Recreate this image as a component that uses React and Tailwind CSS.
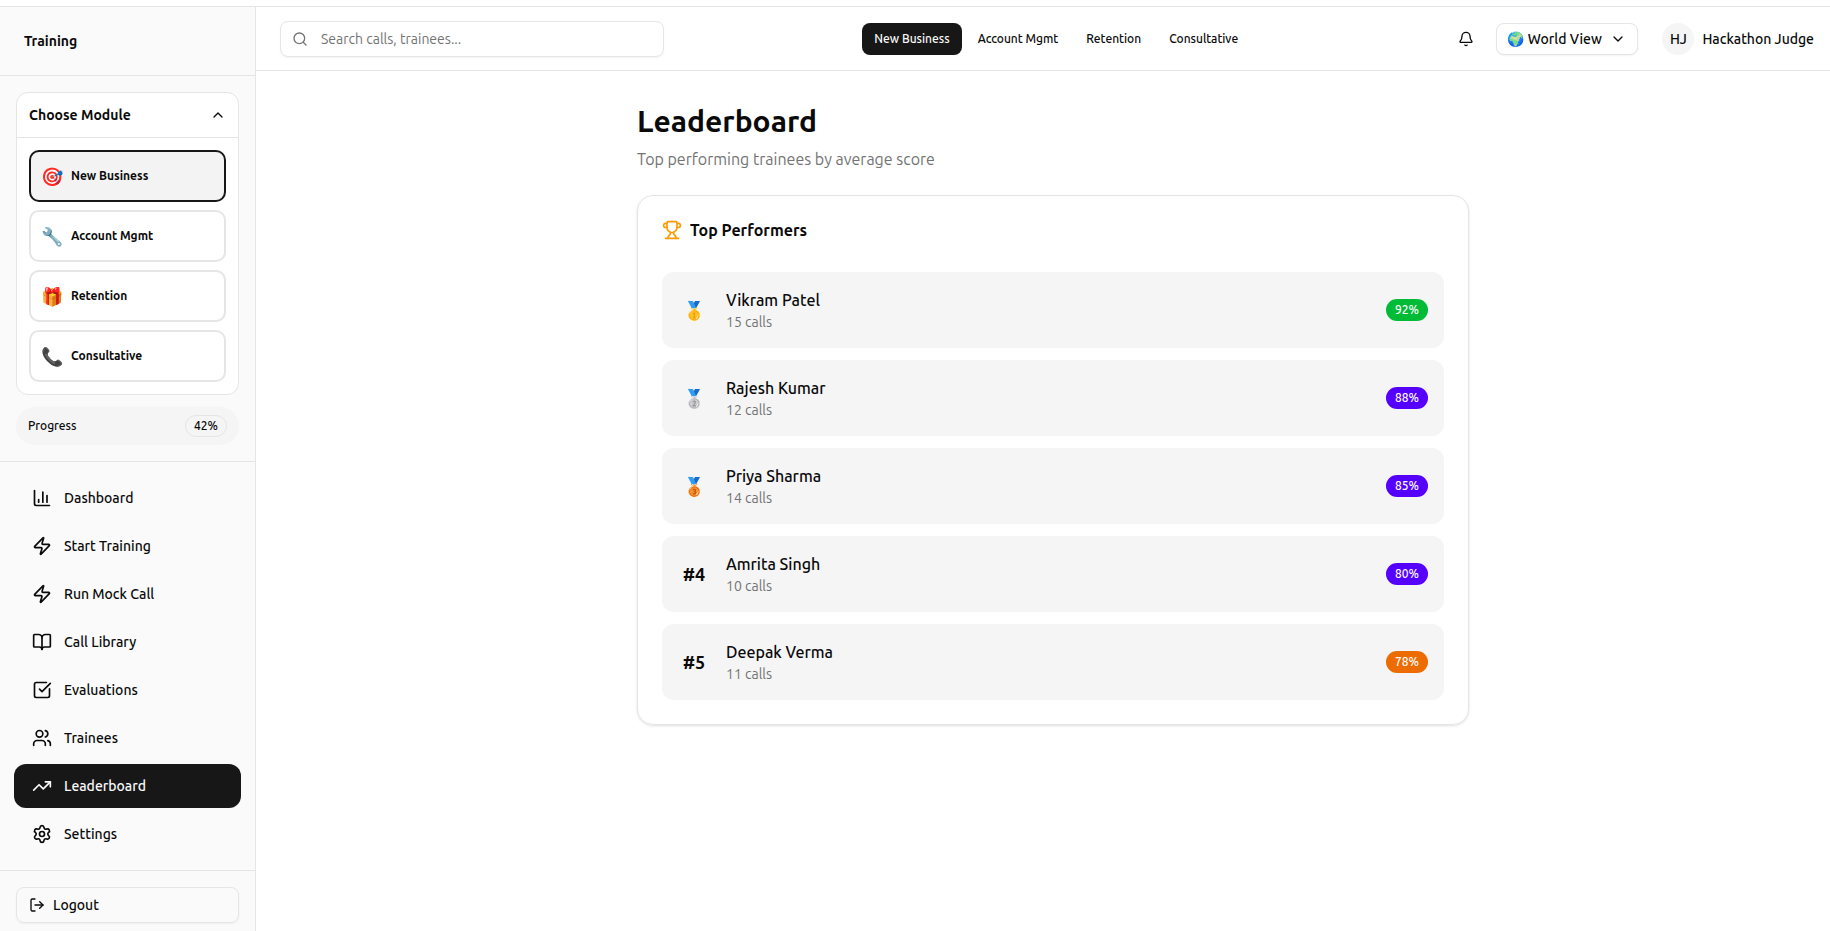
import { useState } from 'react'
import {
  Bell, BookOpen, ChartColumn, ChevronDown, ChevronUp, LogOut, Search,
  Settings, SquareCheckBig, TrendingUp, Trophy, Users, Zap,
} from 'lucide-react'

const MODULES = [
  { id: 'new-business', label: 'New Business', icon: '🎯' },
  { id: 'account-mgmt', label: 'Account Mgmt', icon: '🔧' },
  { id: 'retention', label: 'Retention', icon: '🎁' },
  { id: 'consultative', label: 'Consultative', icon: '📞' },
]

const NAV_ITEMS = [
  { id: 'dashboard', label: 'Dashboard', icon: ChartColumn },
  { id: 'start-training', label: 'Start Training', icon: Zap },
  { id: 'mock-call', label: 'Run Mock Call', icon: Zap },
  { id: 'library', label: 'Call Library', icon: BookOpen },
  { id: 'evaluations', label: 'Evaluations', icon: SquareCheckBig },
  { id: 'trainees', label: 'Trainees', icon: Users },
  { id: 'leaderboard', label: 'Leaderboard', icon: TrendingUp },
  { id: 'settings', label: 'Settings', icon: Settings },
]

const PERFORMERS = [
  { name: 'Vikram Patel', calls: 15, score: 92 },
  { name: 'Rajesh Kumar', calls: 12, score: 88 },
  { name: 'Priya Sharma', calls: 14, score: 85 },
  { name: 'Amrita Singh', calls: 10, score: 80 },
  { name: 'Deepak Verma', calls: 11, score: 78 },
]

const MEDALS = ['🥇', '🥈', '🥉']

const scoreColor = (score) => {
  if (score >= 90) return 'bg-[#00bb36]'
  if (score >= 80) return 'bg-[#5500ff]'
  return 'bg-[#ed6c00]'
}

function Sidebar({ module, setModule }) {
  const [open, setOpen] = useState(true)
  const [page, setPage] = useState('leaderboard')

  return (
    <aside className="w-64 shrink-0 border-r border-neutral-200 bg-neutral-50">
      <div className="border-b border-neutral-200 p-6">
        <h2 className="text-sm font-bold">Training</h2>
      </div>

      <div className="border-b border-neutral-200 p-4">
        <div className="rounded-xl border border-neutral-200 bg-white">
          <button onClick={() => setOpen(!open)} aria-expanded={open} className="flex w-full items-center justify-between p-3 text-sm font-bold">
            Choose Module
            {open ? <ChevronUp className="size-4" /> : <ChevronDown className="size-4" />}
          </button>
          {open && (
            <div className="space-y-2 border-t border-neutral-200 p-3">
              {MODULES.map((m) => (
                <button key={m.id} onClick={() => setModule(m.id)}
                  className={`flex w-full items-center gap-2 rounded-[10px] border-2 py-3 pr-3 pl-2.5 text-xs font-bold ${module === m.id ? 'border-neutral-900 bg-[#f3f3f3]' : 'border-neutral-200 bg-white'}`}>
                  <span className="text-lg leading-6">{m.icon}</span>
                  {m.label}
                </button>
              ))}
            </div>
          )}
        </div>
        <div className="mt-3 flex items-center justify-between rounded-full bg-neutral-100 px-3 py-2 text-xs font-medium">
          Progress
          <span className="rounded-full border border-neutral-200 px-2 py-0.5">42%</span>
        </div>
      </div>

      <nav className="space-y-1 border-b border-neutral-200 p-3.5">
        {NAV_ITEMS.map(({ id, label, icon: Icon }) => (
          <button key={id} onClick={() => setPage(id)}
            className={`flex h-11 w-full items-center gap-3 rounded-xl px-4.5 text-sm font-medium ${page === id ? 'bg-neutral-900 text-neutral-50' : ''}`}>
            <Icon className="size-5" />
            {label}
          </button>
        ))}
      </nav>

      <div className="px-4 pt-4 pb-2">
        <button className="flex h-9 w-full items-center gap-2 rounded-lg border border-neutral-200 px-3 text-sm font-medium shadow-xs">
          <LogOut className="size-4" />
          Logout
        </button>
      </div>
    </aside>
  )
}

function Header({ module, setModule }) {
  return (
    <header className="flex h-16 items-center justify-between border-b border-neutral-200 pr-4 pl-6">
      <div className="relative w-96">
        <Search className="absolute top-2.5 left-3 size-4 text-neutral-500" />
        <input type="search" aria-label="Search" placeholder="Search calls, trainees..."
          className="h-9 w-full rounded-lg border border-neutral-200 pr-3 pl-10 text-sm shadow-xs placeholder:text-neutral-500 focus:outline-none" />
      </div>

      <div className="flex gap-1">
        {MODULES.map((m) => (
          <button key={m.id} onClick={() => setModule(m.id)}
            className={`h-8 rounded-lg px-3 text-xs font-medium ${module === m.id ? 'bg-neutral-900 text-neutral-50' : ''}`}>
            {m.label}
          </button>
        ))}
      </div>

      <div className="flex items-center">
        <button aria-label="Notifications" className="mr-3 flex size-9 items-center justify-center">
          <Bell className="size-4" />
        </button>
        <div className="relative mr-6">
          <select aria-label="View" className="h-8 w-[142px] appearance-none rounded-lg border border-neutral-200 bg-white pr-8 pl-2.5 text-sm font-medium shadow-xs">
            <option>🌍 World View</option>
          </select>
          <ChevronDown className="pointer-events-none absolute top-2 right-3 size-4" />
        </div>
        <div className="flex items-center gap-2 text-sm font-medium">
          <span className="flex size-8 items-center justify-center rounded-full bg-neutral-100">HJ</span>
          Hackathon Judge
        </div>
      </div>
    </header>
  )
}

function Leaderboard() {
  return (
    <main className="pl-5">
      <div className="mx-auto max-w-4xl p-8">
        <h1 className="text-3xl font-bold">Leaderboard</h1>
        <p className="mt-2 text-neutral-500">Top performing trainees by average score</p>

        <section className="mt-6 rounded-2xl border border-neutral-200 p-6 shadow-sm">
          <h2 className="flex items-center gap-2 leading-5 font-bold">
            <Trophy className="size-5 text-amber-500" />
            Top Performers
          </h2>
          <ol className="mt-8 space-y-3">
            {PERFORMERS.map((p, i) => (
              <li key={p.name} className="flex items-center gap-4 rounded-xl bg-neutral-100 p-4">
                <span className="w-8 text-center text-lg font-bold">{MEDALS[i] || `#${i + 1}`}</span>
                <div className="flex-1">
                  <p className="font-medium">{p.name}</p>
                  <p className="text-sm text-neutral-500">{p.calls} calls</p>
                </div>
                <span className={`rounded-full border border-transparent px-2 py-0.5 text-xs font-medium text-neutral-50 ${scoreColor(p.score)}`}>{p.score}%</span>
              </li>
            ))}
          </ol>
        </section>
      </div>
    </main>
  )
}

export default function App() {
  const [module, setModule] = useState('new-business')

  return (
    <div className="flex min-h-screen flex-col bg-white pt-1.5 font-['Ubuntu','Noto_Sans',sans-serif] text-neutral-950">
      <div className="flex flex-1 border-t border-neutral-200">
        <Sidebar module={module} setModule={setModule} />
        <div className="min-w-0 flex-1">
          <Header module={module} setModule={setModule} />
          <Leaderboard />
        </div>
      </div>
    </div>
  )
}
